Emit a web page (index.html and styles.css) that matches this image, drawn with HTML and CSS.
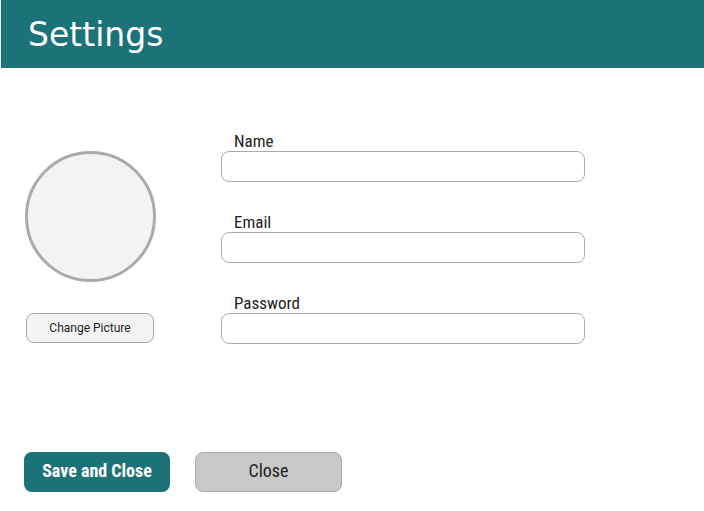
FILE: index.html
```html
<!DOCTYPE html>
<html>
<head>
<meta charset="utf-8">
<link rel="stylesheet" href="styles.css">
</head>
<body>
<header class="topbar"><h1 class="title">Settings</h1></header>
<main class="content">
  <div class="row">
    <div class="avatar-col">
      <div class="avatar"></div>
      <button class="btn-small">Change Picture</button>
    </div>
    <div class="form">
      <div class="field">
        <label class="label">Name</label>
        <input class="input" type="text">
      </div>
      <div class="field">
        <label class="label">Email</label>
        <input class="input" type="text">
      </div>
      <div class="field">
        <label class="label">Password</label>
        <input class="input" type="password">
      </div>
    </div>
  </div>
  <div class="actions">
    <button class="btn btn-primary">Save and Close</button>
    <button class="btn btn-secondary">Close</button>
  </div>
</main>
</body>
</html>
```
FILE: styles.css
```css
html, body { margin: 0; padding: 0; background: #fff; }
body { font-family: Roboto, "Liberation Sans", sans-serif; color: #222; width: 704px; height: 511px; overflow: hidden; }
.topbar { margin-left: 1px; height: 68px; background: #1b7377; box-sizing: border-box; padding: 16px 0 0 27px; }
.title { margin: 0; font-family: "DejaVu Sans", sans-serif; font-weight: normal; font-size: 33px; line-height: 38px; color: #fff; }
.content { padding-top: 63px; }
.row { display: flex; }
.avatar-col { display: flex; flex-direction: column; padding-left: 25px; padding-top: 20px; width: 131px; }
.avatar { width: 131px; height: 131px; box-sizing: border-box; border: 3px solid #aaa; border-radius: 50%; background: #f3f3f3; }
.btn-small { margin: 31px 0 0 1px; width: 128px; height: 30px; box-sizing: border-box; border: 1px solid #aaa; border-radius: 8px; background: #f3f3f3; font-family: Roboto, sans-serif; font-size: 12px; color: #222; padding: 0; }
.form { margin-left: 65px; display: flex; flex-direction: column; gap: 30px; }
.field { display: flex; flex-direction: column; }
.label { font-size: 17px; line-height: 20px; padding-left: 13px; color: #222; font-stretch: condensed; }
.input { width: 364px; height: 31px; box-sizing: border-box; border: 1px solid #aaa; border-radius: 8px; margin: 0; padding: 0 8px; background: #fff; }
.actions { display: flex; gap: 25px; margin-top: 108px; padding-left: 24px; }
.btn { height: 40px; box-sizing: border-box; border-radius: 8px; font-family: Roboto, sans-serif; font-size: 18px; padding: 0 0 3px 0; font-stretch: condensed; }
.btn-primary { width: 146px; background: #1b7377; color: #fff; border: none; font-weight: bold; }
.btn-secondary { width: 147px; background: #c8c8c8; color: #222; border: 1px solid #aaa; }
```
